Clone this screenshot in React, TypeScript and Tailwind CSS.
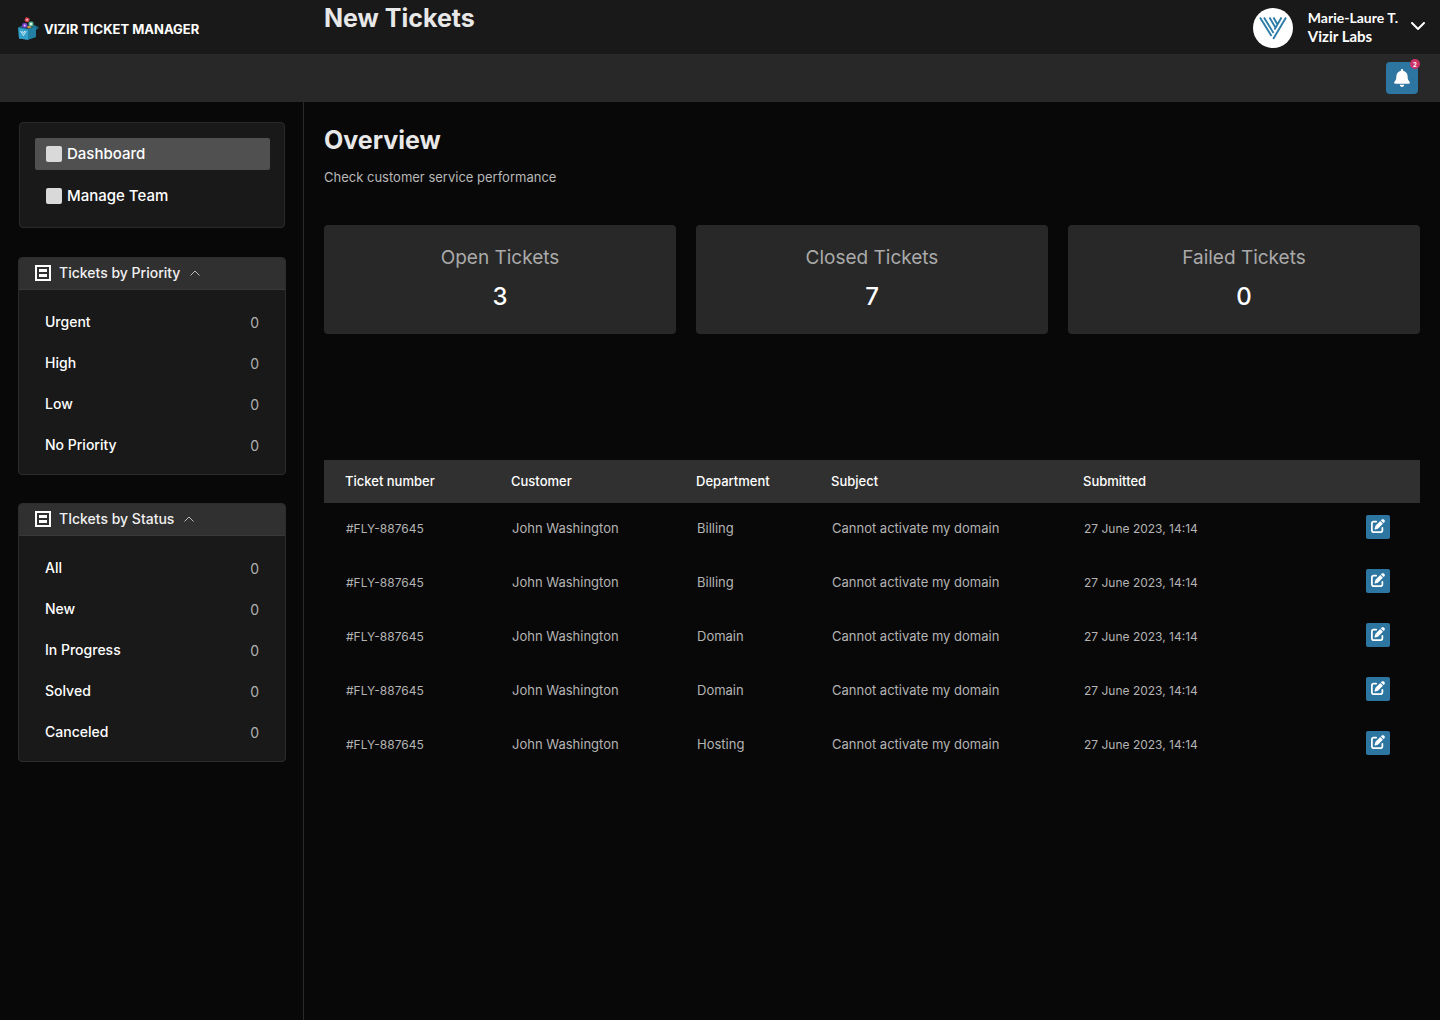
import React from "react";
import { FaBell, FaPenToSquare } from "react-icons/fa6";

const priorities = ["Urgent", "High", "Low", "No Priority"];
const statuses = ["All", "New", "In Progress", "Solved", "Canceled"];
const departments = ["Billing", "Billing", "Domain", "Domain", "Hosting"];
const stats = [
  { label: "Open Tickets", value: 3 },
  { label: "Closed Tickets", value: 7 },
  { label: "Failed Tickets", value: 0 },
];

function BoxLogo() {
  return (
    <svg viewBox="0 0 22 24" className="h-6 w-[22px] shrink-0" aria-hidden="true">
      <path d="M0 10.500 4 9l13-.8 3.500 3.300-3 1.500V20l-8 2.800L1 21.500z" fill="#1f7fa3" />
      <path d="M2 10.500 8 9l9 .5-6.500 2.500z" fill="#173f50" />
      <path d="M8.500 9.500l4-.8 1 1.800-3 1z" fill="#e8913a" />
      <rect x="6.800" y="0.500" width="4.600" height="4.600" rx="1.600" transform="rotate(20 9.100 2.800)" fill="#d8404f" />
      <circle cx="9.100" cy="2.800" r="1" fill="#f3c3c8" />
      <rect x="4.200" y="6" width="5" height="4.800" rx="1.800" fill="#7a3fd0" />
      <circle cx="6.700" cy="8.400" r="1" fill="#d8c4f5" />
      <rect x="10.500" y="4.500" width="5" height="5" rx="1.500" fill="#4fae8c" />
      <circle cx="13" cy="7" r="1.300" fill="#e2f5ec" />
      <path d="M0.500 11.300l9.500.9v10.600L1 21.500z" fill="#35a0c8" />
      <path d="M10 12.200l8-1.200v9l-8 2.800z" fill="#237fa4" />
      <path d="M18 11l1-2.500 2 2.600-2.300 1.500z" fill="#1b5a74" />
      <path d="M2.500 14l2.900 4.500L8.300 14M4 14l1.400 2.200L6.800 14" fill="none" stroke="#d8f0f8" strokeWidth="0.900" />
    </svg>
  );
}

function ListIcon() {
  return (
    <svg viewBox="0 0 16 16" className="size-4 shrink-0" aria-hidden="true">
      <path d="M1 1h14v14H1z" fill="none" stroke="#fff" strokeWidth="2" />
      <path d="M4 4h8v3H4zM4 9h8v3H4z" fill="#fff" />
    </svg>
  );
}

function Panel({ title, items }: { title: string; items: string[] }) {
  return (
    <section className="rounded border border-[#2c2c2c] bg-[#191919]">
      <h2>
        <button type="button" className="flex h-8 w-full items-center rounded-t-[3px] border-b border-[#383838] bg-[#303030] pb-0.5 pl-4 text-[14px] font-medium text-[#f0f0f0]">
          <ListIcon />
          <span className="ml-2">{title}</span>
          <svg viewBox="0 0 10 6" className="ml-2.5 h-1.5 w-2.5" aria-hidden="true">
            <path d="M0.500 5.500 5 1l4.500 4.500" fill="none" stroke="#bbb" />
          </svg>
        </button>
      </h2>
      <ul className="pt-3 pb-2">
        {items.map((item) => (
          <li key={item}>
            <a href="#" className="flex h-[41px] items-center justify-between px-[26px] text-[14px] font-medium text-white">
              <span className="pb-0.5">{item}</span>
              <span className="font-normal text-[#b0b0b0]">0</span>
            </a>
          </li>
        ))}
      </ul>
    </section>
  );
}

export default function App() {
  return (
    <div className="flex min-h-screen flex-col bg-[#080808] font-['Inter',sans-serif] text-white">
      <header className="flex h-[54px] items-center bg-[#191919]">
        <div className="flex w-[304px] shrink-0 items-center gap-1 pt-1 pl-[18px]">
          <BoxLogo />
          <span className="pt-0.5 text-[13px] font-bold">VIZIR TICKET MANAGER</span>
        </div>
        <div className="flex-1 self-start pl-5">
          <h1 className="text-[25px] leading-9 font-bold text-[#e8e8e8]">New Tickets</h1>
        </div>
        <button type="button" className="flex items-center pt-0.5 pr-[15px] text-left font-['Lato',sans-serif]">
          <span className="flex size-10 items-center justify-center rounded-full bg-white">
            <svg viewBox="0 0 28 24" className="h-6 w-7" fill="none" stroke="#2e7da8" strokeWidth="1.900" aria-hidden="true">
              <path d="M1 1.500l11.500 18.500M5 1.500l9.500 15.500M10.500 1.500l6.500 11M14.500 1.500l4 7M27 1.500 14.200 23M22.500 1.500 15.500 13.500" />
            </svg>
          </span>
          <span className="ml-[15px] flex flex-col pb-0.5 leading-[19px] font-bold">
            <span className="text-[14px]">Marie-Laure T.</span>
            <span className="text-[15px]">Vizir Labs</span>
          </span>
          <svg viewBox="0 0 14 8" className="mb-1 ml-[13px] h-2 w-3.5" aria-hidden="true">
            <path d="M1 1l6 6 6-6" fill="none" stroke="#fff" strokeWidth="2" strokeLinecap="round" />
          </svg>
        </button>
      </header>
      <div className="flex h-12 items-center justify-end bg-[#282828] pr-[22px]">
        <button type="button" aria-label="Notifications" className="relative flex size-8 items-center justify-center rounded bg-[#2d76a1]">
          <FaBell className="h-[18px] w-4" />
          <span className="absolute -top-[3px] -right-0.5 flex size-2.5 items-center justify-center rounded-full bg-[#cc3366] text-[6px] font-bold">2</span>
        </button>
      </div>
      <div className="flex flex-1">
        <aside className="w-[304px] shrink-0 border-r border-[#2a2a2a] pt-5 pr-[17px] pl-[18px]">
          <nav className="mx-px mb-[29px] flex flex-col gap-2.5 rounded border border-[#2a2a2a] bg-[#191919] py-[15px] pr-3.5 pl-[15px] text-[15px] font-medium">
            <a href="#" className="flex h-8 items-center gap-[5px] rounded-xs bg-[#505050] pl-[11px]">
              <span className="size-4 rounded-xs bg-[#d9d9d9]" />
              Dashboard
            </a>
            <a href="#" className="flex h-8 items-center gap-[5px] pl-[11px]">
              <span className="size-4 rounded-xs bg-[#d9d9d9]" />
              Manage Team
            </a>
          </nav>
          <div className="flex flex-col gap-7">
            <Panel title="Tickets by Priority" items={priorities} />
            <Panel title="TIckets by Status" items={statuses} />
          </div>
        </aside>
        <main className="min-w-0 flex-1 px-5 pt-5">
          <h2 className="text-[25px] leading-9 font-bold text-[#e8e8e8]">Overview</h2>
          <p className="mt-2.5 text-[13px] leading-[18px] text-[#b8b8b8]">Check customer service performance</p>
          <div className="mt-[39px] grid grid-cols-3 gap-5">
            {stats.map((s) => (
              <div key={s.label} className="rounded bg-[#282828] py-5 text-center">
                <h3 className="text-[19px] leading-[26px] text-[#aaa]">{s.label}</h3>
                <p className="mt-2 text-[24px] leading-[35px] font-medium">{s.value}</p>
              </div>
            ))}
          </div>
          <table className="mt-[126px] w-full table-fixed text-left text-[13px]">
            <thead>
              <tr className="h-[43px] bg-[#303030] text-white">
                <th className="w-[166px] pl-[21px] font-medium">Ticket number</th>
                <th className="w-[185px] pl-[21px] font-medium">Customer</th>
                <th className="w-[135px] pl-[21px] font-medium">Department</th>
                <th className="w-[252px] pl-[21px] font-medium">Subject</th>
                <th className="pl-[21px] font-medium">Submitted</th>
                <th className="w-[76px]" aria-label="Actions" />
              </tr>
            </thead>
            <tbody>
              {departments.map((d, i) => (
                <tr key={i} className="h-[54px] align-top leading-[26px] text-[#b4b4b4]">
                  <td className="pt-3 pl-[22px] text-[12px] leading-7">#FLY-887645</td>
                  <td className="pt-3 pl-[22px]">John Washington</td>
                  <td className="pt-3 pl-[22px]">{d}</td>
                  <td className="pt-3 pl-[22px]">Cannot activate my domain</td>
                  <td className="pt-3 pl-[22px] text-[12px] leading-7">27 June 2023, 14:14</td>
                  <td className="pt-3 pl-[22px]">
                    <button type="button" aria-label="Edit ticket" className="flex size-6 items-center justify-center rounded-xs bg-[#2d76a1] pb-0.5 text-white">
                      <FaPenToSquare className="size-3.5" />
                    </button>
                  </td>
                </tr>
              ))}
            </tbody>
          </table>
        </main>
      </div>
    </div>
  );
}
